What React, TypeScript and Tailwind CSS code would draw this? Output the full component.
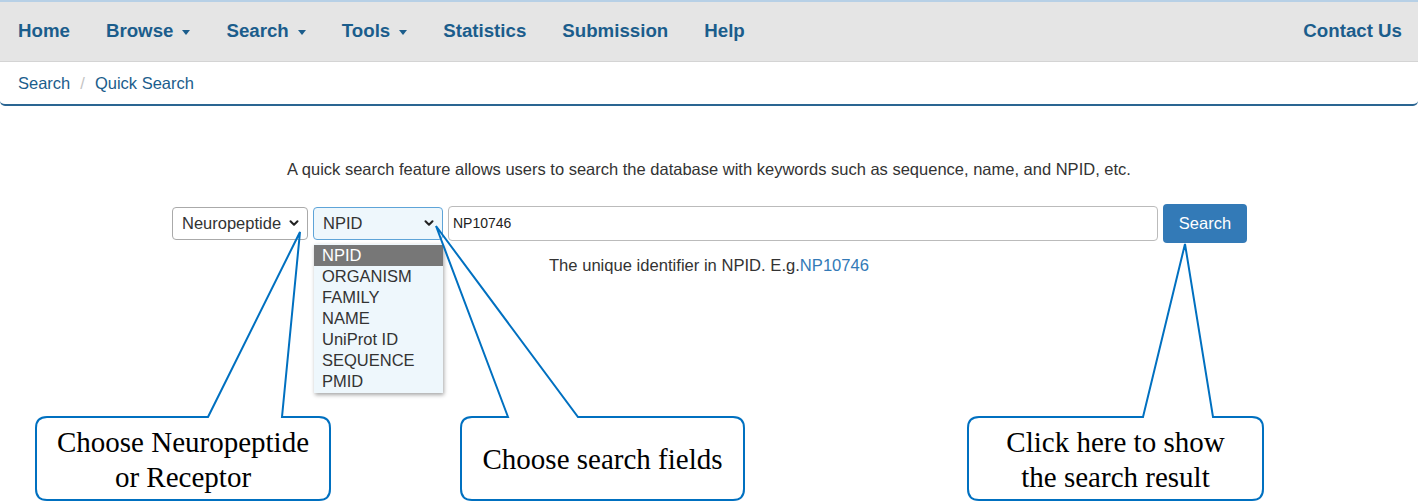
import { ChevronDown } from 'lucide-react'

const navItems = [
  { label: 'Home', caret: false },
  { label: 'Browse', caret: true },
  { label: 'Search', caret: true },
  { label: 'Tools', caret: true },
  { label: 'Statistics', caret: false },
  { label: 'Submission', caret: false },
  { label: 'Help', caret: false },
]

const fields = ['NPID', 'ORGANISM', 'FAMILY', 'NAME', 'UniProt ID', 'SEQUENCE', 'PMID']

function Caret() {
  return <span className="ml-[9px] inline-block h-0 w-0 border-x-[4.5px] border-t-[5px] border-x-transparent border-t-[#1b5d8c] align-middle" />
}

// callout outlines: rounded box with an open notch and two pointer lines
function calloutPath(x1: number, x2: number, a: number, b: number, tx: number, ty: number, top = 417, bottom = 500, r = 11) {
  return `M ${a} ${top} L ${tx} ${ty} L ${b} ${top} L ${x2 - r} ${top} Q ${x2} ${top} ${x2} ${top + r} L ${x2} ${bottom - r} Q ${x2} ${bottom} ${x2 - r} ${bottom} L ${x1 + r} ${bottom} Q ${x1} ${bottom} ${x1} ${bottom - r} L ${x1} ${top + r} Q ${x1} ${top} ${x1 + r} ${top} Z`
}

export default function App() {
  return (
    <div className="relative h-[502px] w-[1418px] overflow-hidden bg-white font-['Liberation_Sans',Arial,sans-serif] text-[#333]">
      <nav className="flex h-[62px] items-center justify-between border-t-2 border-b border-t-[#b7d0e6] border-b-[#d4d4d4] bg-[#e5e5e5] text-[18.7px] font-bold text-[#1b5d8c]">
        <ul className="flex items-center">
          {navItems.map(item => (
            <li key={item.label} className="px-[18px]">
              {item.label}
              {item.caret && <Caret />}
            </li>
          ))}
        </ul>
        <span className="pr-[16px]">Contact Us</span>
      </nav>

      <div className="flex h-[44px] items-center rounded-b-[5px] border-b-2 border-[#2a6592] pl-[18px] text-[16.5px] text-[#1b5d8c]">
        <span>Search</span>
        <span className="px-[10px] text-[#c4c4c4]">/</span>
        <span>Quick Search</span>
      </div>

      <p className="mt-[51px] text-center text-[16.5px]">
        A quick search feature allows users to search the database with keywords such as sequence, name, and NPID, etc.
      </p>

      <div className="mt-[22px] flex items-center pl-[172px]">
        <div className="flex h-[33px] w-[136px] items-center justify-between rounded-[4px] border border-[#aaa] bg-white pl-[9px] pr-[6px] text-[16.5px]">
          Neuropeptide
          <ChevronDown size={14} strokeWidth={3.5} className="text-[#222]" />
        </div>
        <div className="relative ml-[5px]">
          <div className="flex h-[33px] w-[130px] items-center justify-between rounded-[4px] border border-[#5ea4d8] bg-[#eef7fc] pl-[9px] pr-[6px] text-[16.5px]">
            NPID
            <ChevronDown size={14} strokeWidth={3.5} className="text-[#222]" />
          </div>
          <ul className="absolute left-[1px] top-[37px] w-[129px] bg-[#eef7fc] py-[1px] text-[16.5px] leading-[21px] shadow-[1px_2px_4px_rgba(0,0,0,0.35)]">
            {fields.map((f, i) => (
              <li key={f} className={i === 0 ? 'bg-[#777] px-[8px] text-white' : 'px-[8px] text-[#333]'}>{f}</li>
            ))}
          </ul>
        </div>
        <div className="ml-[5px] flex h-[35px] w-[710px] items-center rounded-[4px] border border-[#bbb] px-[4px] text-[14px] text-[#222]">
          NP10746
        </div>
        <button className="ml-[5px] h-[39px] w-[84px] rounded-[4px] bg-[#337ab7] text-[16.5px] text-white">Search</button>
      </div>

      <p className="mt-[11px] text-center text-[16.6px]">
        The unique identifier in NPID. E.g.<span className="text-[#337ab7]">NP10746</span>
      </p>

      <svg className="absolute inset-0" width="1418" height="502" fill="none" stroke="#0070c0" strokeWidth="2">
        <path d={calloutPath(36, 330, 208, 282, 300, 232)} />
        <path d={calloutPath(461, 744, 508, 578, 436, 226)} />
        <path d={calloutPath(968, 1263, 1143, 1213, 1185, 244)} />
      </svg>

      <div className="absolute left-[36px] top-[417px] flex h-[83px] w-[294px] flex-col items-center justify-center pt-[3px] font-['Liberation_Serif','Times_New_Roman',serif] text-[29px] leading-[35px] text-black">
        <span>Choose Neuropeptide</span>
        <span>or Receptor</span>
      </div>
      <div className="absolute left-[461px] top-[417px] flex h-[83px] w-[283px] items-center justify-center pt-[3px] font-['Liberation_Serif','Times_New_Roman',serif] text-[29px] text-black">
        Choose search fields
      </div>
      <div className="absolute left-[968px] top-[417px] flex h-[83px] w-[295px] flex-col items-center justify-center pt-[3px] font-['Liberation_Serif','Times_New_Roman',serif] text-[29px] leading-[35px] text-black">
        <span>Click here to show</span>
        <span>the search result</span>
      </div>
    </div>
  )
}
